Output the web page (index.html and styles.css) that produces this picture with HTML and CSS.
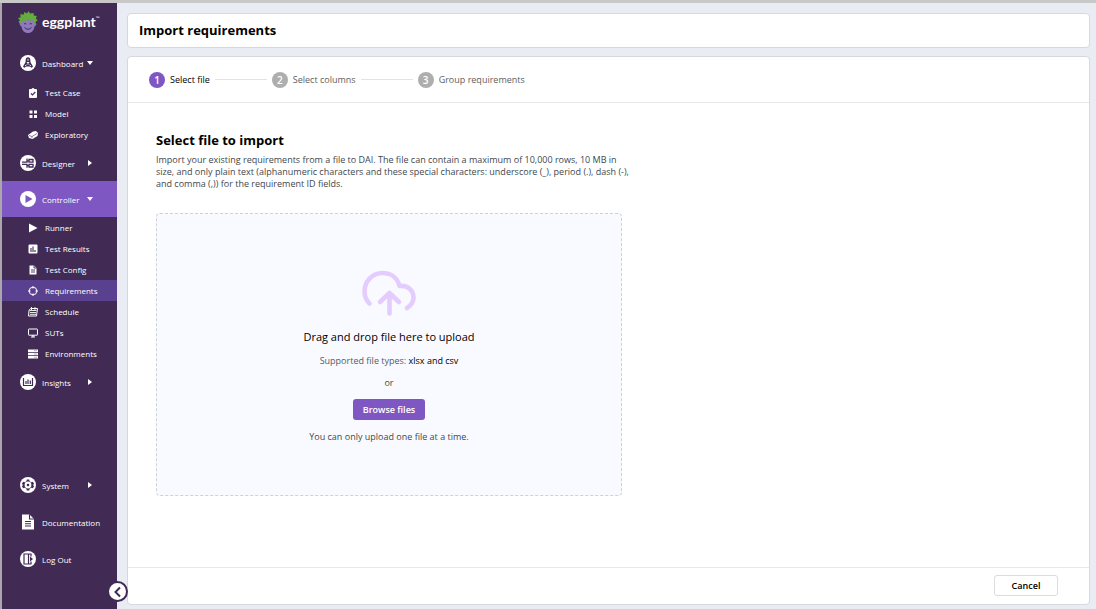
FILE: index.html
```html
<!DOCTYPE html>
<html lang="en">
<head>
<meta charset="utf-8">
<title>Import requirements</title>
<link rel="stylesheet" href="styles.css">
</head>
<body>
<div class="app">
  <nav class="sidebar" aria-label="Main">
    <a class="brand" href="#">
      <svg class="brand-face" viewBox="0 0 22 24" aria-hidden="true">
        <path d="M4 10h14v3c1 0 1.500.7 1.300 1.500s-.8 1.500-1.600 1.500C17 20.500 14.500 23 11 23s-6-2.500-6.700-7c-.8 0-1.400-.7-1.600-1.500S3 13 4 13z" fill="#8f79bd"/>
        <path d="M3 14 1.500 11.500l1.500-1-2-2.500 2.500-.5L3.500 4l3 .7 1-2.700 2.500 1.500L11.500 1l1.500 2.500L16.500 3l.3 2.500 3 .5-1 2.500 2 2-2 1L18.500 14 17 12.500l-.5-2.500-3 .7-2.500-1-2.500 1.300-3-.5-1 2z" fill="#62ad3b"/>
        <path d="M7 14q1.200-1 2.400 0M12.500 14q1.200-1 2.400 0M7.500 17.500q3.500 3.500 7 0" fill="none" stroke="#412b55" stroke-width="1"/>
      </svg>
      <span class="brand-name">eggplant<i class="brand-tm">™</i></span>
    </a>

    <a class="group" href="#">
      <svg class="group-icon" viewBox="0 0 16 16" aria-hidden="true"><circle cx="8" cy="8" r="8" fill="#fff"/><path d="M8 2.200c1.500 0 2.300 1.200 2.300 2.800 0 1.800.3 3 1.400 4.300l1.300 2.200-1.200 1.300-2.300-1.300h-3l-2.300 1.300L3 11.500l1.300-2.200C5.400 8 5.700 6.800 5.700 5c0-1.600.8-2.800 2.300-2.800z" fill="#412b55"/><path d="M8 3.800v2M6.800 7.500h2.400M8 7.500v2.200M5 11l1.500-1.200M11 11 9.500 9.800" stroke="#fff" stroke-width=".9"/></svg>
      <span class="group-label">Dashboard</span><i class="caret caret-down"></i>
    </a>
    <a class="item" href="#"><svg class="item-icon" viewBox="0 0 10 10" aria-hidden="true"><path d="M2 1h1.500q1.500-2 3 0H8q1 0 1 1v7q0 1-1 1H2q-1 0-1-1V2q0-1 1-1z" fill="#fff"/><path d="m3 5.500 1.500 1.500L7.300 4" fill="none" stroke="#412b55" stroke-width="1.200"/></svg>Test Case</a>
    <a class="item" href="#"><svg class="item-icon" viewBox="0 0 10 10" aria-hidden="true"><path d="M1.500 1.500h3v3h-3zM6 1.500h3v3H6zM1.500 6h3v3h-3zM6 6h3v3H6z" fill="#fff"/></svg>Model</a>
    <a class="item" href="#"><svg class="item-icon" viewBox="0 0 10 10" aria-hidden="true"><path d="m0 5 5-3.500 3-.5 2 2-.5 3L4.500 9 1 8z" fill="#fff"/><path d="m1 5.500 3 1 5-3M4 6.500V8" fill="none" stroke="#412b55" stroke-width=".6"/></svg>Exploratory</a>

    <a class="group" href="#">
      <svg class="group-icon" viewBox="0 0 16 16" aria-hidden="true"><circle cx="8" cy="8" r="8" fill="#fff"/><path d="M2 7.200h5V3.500M9 4.500h4v2.700H9zM2 9.300h5v3.500M9 9.300h4V12H9zM7 5.800h2M7 10.600h2" fill="none" stroke="#412b55" stroke-width="1.300"/></svg>
      <span class="group-label">Designer</span><i class="caret caret-right"></i>
    </a>

    <a class="group group-open" href="#">
      <svg class="group-icon" viewBox="0 0 16 16" aria-hidden="true"><circle cx="8" cy="8" r="8" fill="#fff"/><path d="m5.500 4 7 4-7 4z" fill="#7e57c2"/></svg>
      <span class="group-label">Controller</span><i class="caret caret-down"></i>
    </a>
    <a class="item" href="#"><svg class="item-icon" viewBox="0 0 10 10" aria-hidden="true"><path d="m1 .5 8.500 4.500L1 9.500z" fill="#fff"/></svg>Runner</a>
    <a class="item" href="#"><svg class="item-icon" viewBox="0 0 10 10" aria-hidden="true"><rect x=".5" y=".5" width="9" height="9" rx="1" fill="#fff"/><path d="M3 4v4M5 2.500V8M7 6v2" stroke="#412b55" stroke-width="1.100"/></svg>Test Results</a>
    <a class="item" href="#"><svg class="item-icon" viewBox="0 0 10 10" aria-hidden="true"><path d="M1.500.5H6L8.500 3v6.500h-7z" fill="#fff"/><path d="M6 .5V3h2.500M3 5h4M3 7h4" fill="none" stroke="#412b55" stroke-width=".9"/></svg>Test Config</a>
    <a class="item item-current" href="#" aria-current="page"><svg class="item-icon" viewBox="0 0 10 10" aria-hidden="true"><circle cx="5" cy="5" r="3.800" fill="none" stroke="#fff"/><path d="M5 0v2.500M5 7.500V10M0 5h2.500M7.500 5H10" stroke="#fff"/></svg>Requirements</a>
    <a class="item" href="#"><svg class="item-icon" viewBox="0 0 10 10" aria-hidden="true"><path d="M2.500 1.500h7L8.500 9H.5L1 3.500z" fill="none" stroke="#fff"/><path d="M1.500 3.500h7M2 5.500h6M2 7.300h6M3.500 0v3M7 0v3" stroke="#fff" stroke-width=".9"/></svg>Schedule</a>
    <a class="item" href="#"><svg class="item-icon" viewBox="0 0 10 10" aria-hidden="true"><rect x=".5" y="1" width="9" height="6.200" rx=".5" fill="none" stroke="#fff"/><path d="M5 7v1.500M3 9h4" stroke="#fff" stroke-width="1.200"/></svg>SUTs</a>
    <a class="item" href="#"><svg class="item-icon" viewBox="0 0 10 10" aria-hidden="true"><path d="M0 .5h10V3H0zM0 3.700h10v2.500H0zM0 7h10v2.500H0z" fill="#fff"/><path d="M6 1.700h3M6 5h3M6 8.200h3" stroke="#9c90a8" stroke-width=".7"/></svg>Environments</a>

    <a class="group" href="#">
      <svg class="group-icon" viewBox="0 0 16 16" aria-hidden="true"><circle cx="8" cy="8" r="8" fill="#fff"/><path d="M3.500 4v7.500h9V4M6 10V7M8 10V5.500M10.300 10V6.500" fill="none" stroke="#412b55" stroke-width="1.200"/></svg>
      <span class="group-label">Insights</span><i class="caret caret-right"></i>
    </a>

    <div class="sidebar-foot">
      <a class="group" href="#">
        <svg class="group-icon" viewBox="0 0 16 16" aria-hidden="true"><circle cx="8" cy="8" r="8" fill="#fff"/><path d="m6.800 2.500-.4 1.700-1.700 1-1.600-.5-1.200 2.200L3.200 8l-1.300 1.100 1.200 2.200 1.600-.5 1.700 1 .4 1.700h2.400l.4-1.700 1.700-1 1.600.5 1.200-2.200L12.800 8l1.300-1.100-1.200-2.200-1.600.5-1.700-1-.4-1.700z" fill="#412b55"/><circle cx="8" cy="8" r="3.400" fill="#fff"/><circle cx="8" cy="8" r="1.300" fill="#412b55"/></svg>
        <span class="group-label">System</span><i class="caret caret-right"></i>
      </a>
      <a class="group" href="#">
        <svg class="group-icon" viewBox="0 0 16 16" aria-hidden="true"><path d="M2 .5h7.500L14 5v10.500H2z" fill="#fff"/><path d="M9.500.5V5H14M5 7.500h6M5 9.700h6M5 12h6" fill="none" stroke="#412b55" stroke-width="1.100"/></svg>
        <span class="group-label">Documentation</span>
      </a>
      <a class="group" href="#">
        <svg class="group-icon" viewBox="0 0 16 16" aria-hidden="true"><circle cx="8" cy="8" r="8" fill="#fff"/><path d="M4 3h4.500v10H4zM8.500 3H11v2.500M8.500 13H11v-2.500" fill="none" stroke="#412b55" stroke-width="1.200"/><path d="m10 5.500 3 2.500-3 2.500z" fill="#412b55"/></svg>
        <span class="group-label">Log Out</span>
      </a>
    </div>
    <button class="collapse" type="button" aria-label="Collapse menu"><svg class="collapse-icon" viewBox="0 0 10 12" aria-hidden="true"><path d="M7 1.500 2.500 6 7 10.500" fill="none" stroke="#412b55" stroke-width="2"/></svg></button>
  </nav>

  <main class="main">
    <header class="card title-bar"><h1 class="title">Import requirements</h1></header>
    <section class="card wizard">
      <ol class="steps">
        <li class="step step-current" aria-current="step"><span class="step-number">1</span>Select file</li>
        <li class="step"><span class="step-number">2</span>Select columns</li>
        <li class="step"><span class="step-number">3</span>Group requirements</li>
      </ol>
      <div class="content">
        <h2 class="heading">Select file to import</h2>
        <p class="intro">Import your existing requirements from a file to DAI. The file can contain a maximum of 10,000 rows, 10 MB in size, and only plain text (alphanumeric characters and these special characters: underscore (_), period (.), dash (-), and comma (,)) for the requirement ID fields.</p>
        <div class="dropzone">
          <svg class="cloud" viewBox="0 0 54 46" aria-hidden="true"><path d="M7.500 33.500C4 30 2.500 26 2.500 21.500 2.500 11 10.500 3 20.500 3 29 3 35.500 8 37.500 16c7.500-1 14 4 14 11.500 0 4.500-2.500 8-6.500 10.500M27.500 43.500V24.500M18 32l9.500-9 9.500 9" fill="none" stroke="#e5ccff" stroke-width="4.600" stroke-linecap="round" stroke-linejoin="round"/></svg>
          <p class="drop-title">Drag and drop file here to upload</p>
          <p class="drop-types">Supported file types: <strong class="types">xlsx and csv</strong></p>
          <p class="drop-or">or</p>
          <button class="browse" type="button">Browse files</button>
          <p class="drop-note">You can only upload one file at a time.</p>
        </div>
      </div>
      <footer class="actions"><button class="cancel" type="button">Cancel</button></footer>
    </section>
  </main>
</div>
</body>
</html>
```
FILE: styles.css
```css
* { box-sizing: border-box; margin: 0; padding: 0; }

body {
  font-family: "Open Sans", "Noto Sans", sans-serif;
  font-size: 9px;
  font-weight: 500;
  background: #e9ecf2;
  color: #000;
}

button { font: inherit; cursor: pointer; }

.app {
  display: flex;
  min-height: 100vh;
  border-top: 3px solid #c8c8c8;
}

.sidebar {
  position: relative;
  display: flex;
  flex-direction: column;
  flex: none;
  width: 117px;
  border-left: 2px solid #aaa6ac;
  background: #412b55;
}

.brand {
  display: flex;
  align-items: center;
  height: 41px;
  padding: 0 0 3px 15px;
  gap: 3px;
  color: #fff;
  text-decoration: none;
}

.brand-face { width: 22px; height: 24px; }

.brand-name {
  display: flex;
  font: 700 14px/20px Lato, sans-serif;
}

.brand-tm { font: 5px/12px Lato, sans-serif; }

.group {
  display: flex;
  align-items: center;
  height: 36px;
  padding-left: 18px;
  color: #fff;
  font-size: 8px;
  text-decoration: none;
}

.brand + .group { height: 38px; }
.group-open { background: #7e57c2; }
.group-icon { width: 16px; height: 16px; margin-right: 6px; }
.group-label { width: 44px; }

.caret { width: 0; height: 0; border: 3px solid transparent; }
.caret-down { margin-left: 1px; border-width: 4px 3px 0; border-top-color: #fff; }
.caret-right { margin-left: 2px; border-width: 3px 0 3px 4px; border-left-color: #fff; }

.item {
  display: flex;
  align-items: center;
  gap: 7px;
  height: 21px;
  padding-left: 26px;
  color: #fff;
  font-size: 8px;
  text-decoration: none;
}

.item-current { background: #5a4190; }
.item-icon { width: 10px; height: 10px; }

.sidebar-foot {
  display: grid;
  gap: 1px;
  margin-top: auto;
  padding-bottom: 32px;
}

.collapse {
  position: absolute;
  right: -11px;
  bottom: 7px;
  display: grid;
  place-items: center;
  width: 21px;
  height: 21px;
  border: 2px solid #412b55;
  border-radius: 50%;
  background: #fff;
}

.collapse-icon { width: 10px; height: 12px; }

.main {
  display: flex;
  flex-direction: column;
  flex: 1;
  gap: 8px;
  min-width: 0;
  padding: 10px 6px 4px 10px;
}

.card {
  border: 1px solid #d5d8dd;
  border-radius: 4px;
  background: #fff;
}

.title-bar { padding: 6px 11px; }
.title { font-size: 13px; font-weight: 700; line-height: 21px; }

.wizard { display: flex; flex: 1; flex-direction: column; }

.steps {
  display: flex;
  align-items: center;
  height: 46px;
  padding-left: 21px;
  border-bottom: 1px solid #e8e8ea;
  list-style: none;
}

.step {
  display: flex;
  align-items: center;
  gap: 5px;
  color: #606060;
}

.step-current { color: #000; }

.step:not(:last-child)::after {
  content: "";
  width: 52px;
  height: 1px;
  margin-right: 5px;
  background: #e3e3e3;
}

.step-number {
  display: grid;
  place-items: center;
  width: 16px;
  height: 16px;
  border-radius: 50%;
  background: #aeaeae;
  color: #fff;
  font-size: 10px;
  font-weight: 600;
}

.step-current .step-number { background: #7e57c2; }

.content { flex: 1; padding: 28px; }
.heading { font-size: 13px; line-height: 18px; }

.intro {
  max-width: 476px;
  margin: 5px 0 23px;
  color: #41474d;
  line-height: 12px;
}

.dropzone {
  display: flex;
  flex-direction: column;
  align-items: center;
  max-width: 466px;
  padding: 56px 20px 52px;
  border: 1px dashed #cfd1d8;
  border-radius: 4px;
  background: #f9faff;
  color: #41474d;
  line-height: 12px;
}

.cloud { width: 54px; height: 46px; }
.drop-title { margin-top: 13px; color: #000; font-size: 11px; line-height: 16px; }
.drop-types { margin-top: 10px; color: #555a5f; }
.types { color: #000; font-weight: 500; }
.drop-or { margin-top: 10px; }

.browse {
  height: 21px;
  margin: 10px 0 11px;
  padding: 0 10px;
  border: 0;
  border-radius: 3px;
  background: #7e57c2;
  color: #fff;
  font-weight: 600;
}

.actions {
  display: flex;
  justify-content: flex-end;
  padding: 7px 31px 8px;
  border-top: 1px solid #e8e8ea;
}

.cancel {
  width: 64px;
  height: 21px;
  border: 1px solid #dcdce0;
  border-radius: 3px;
  background: #fff;
  color: #000;
  font-weight: 600;
}
```
